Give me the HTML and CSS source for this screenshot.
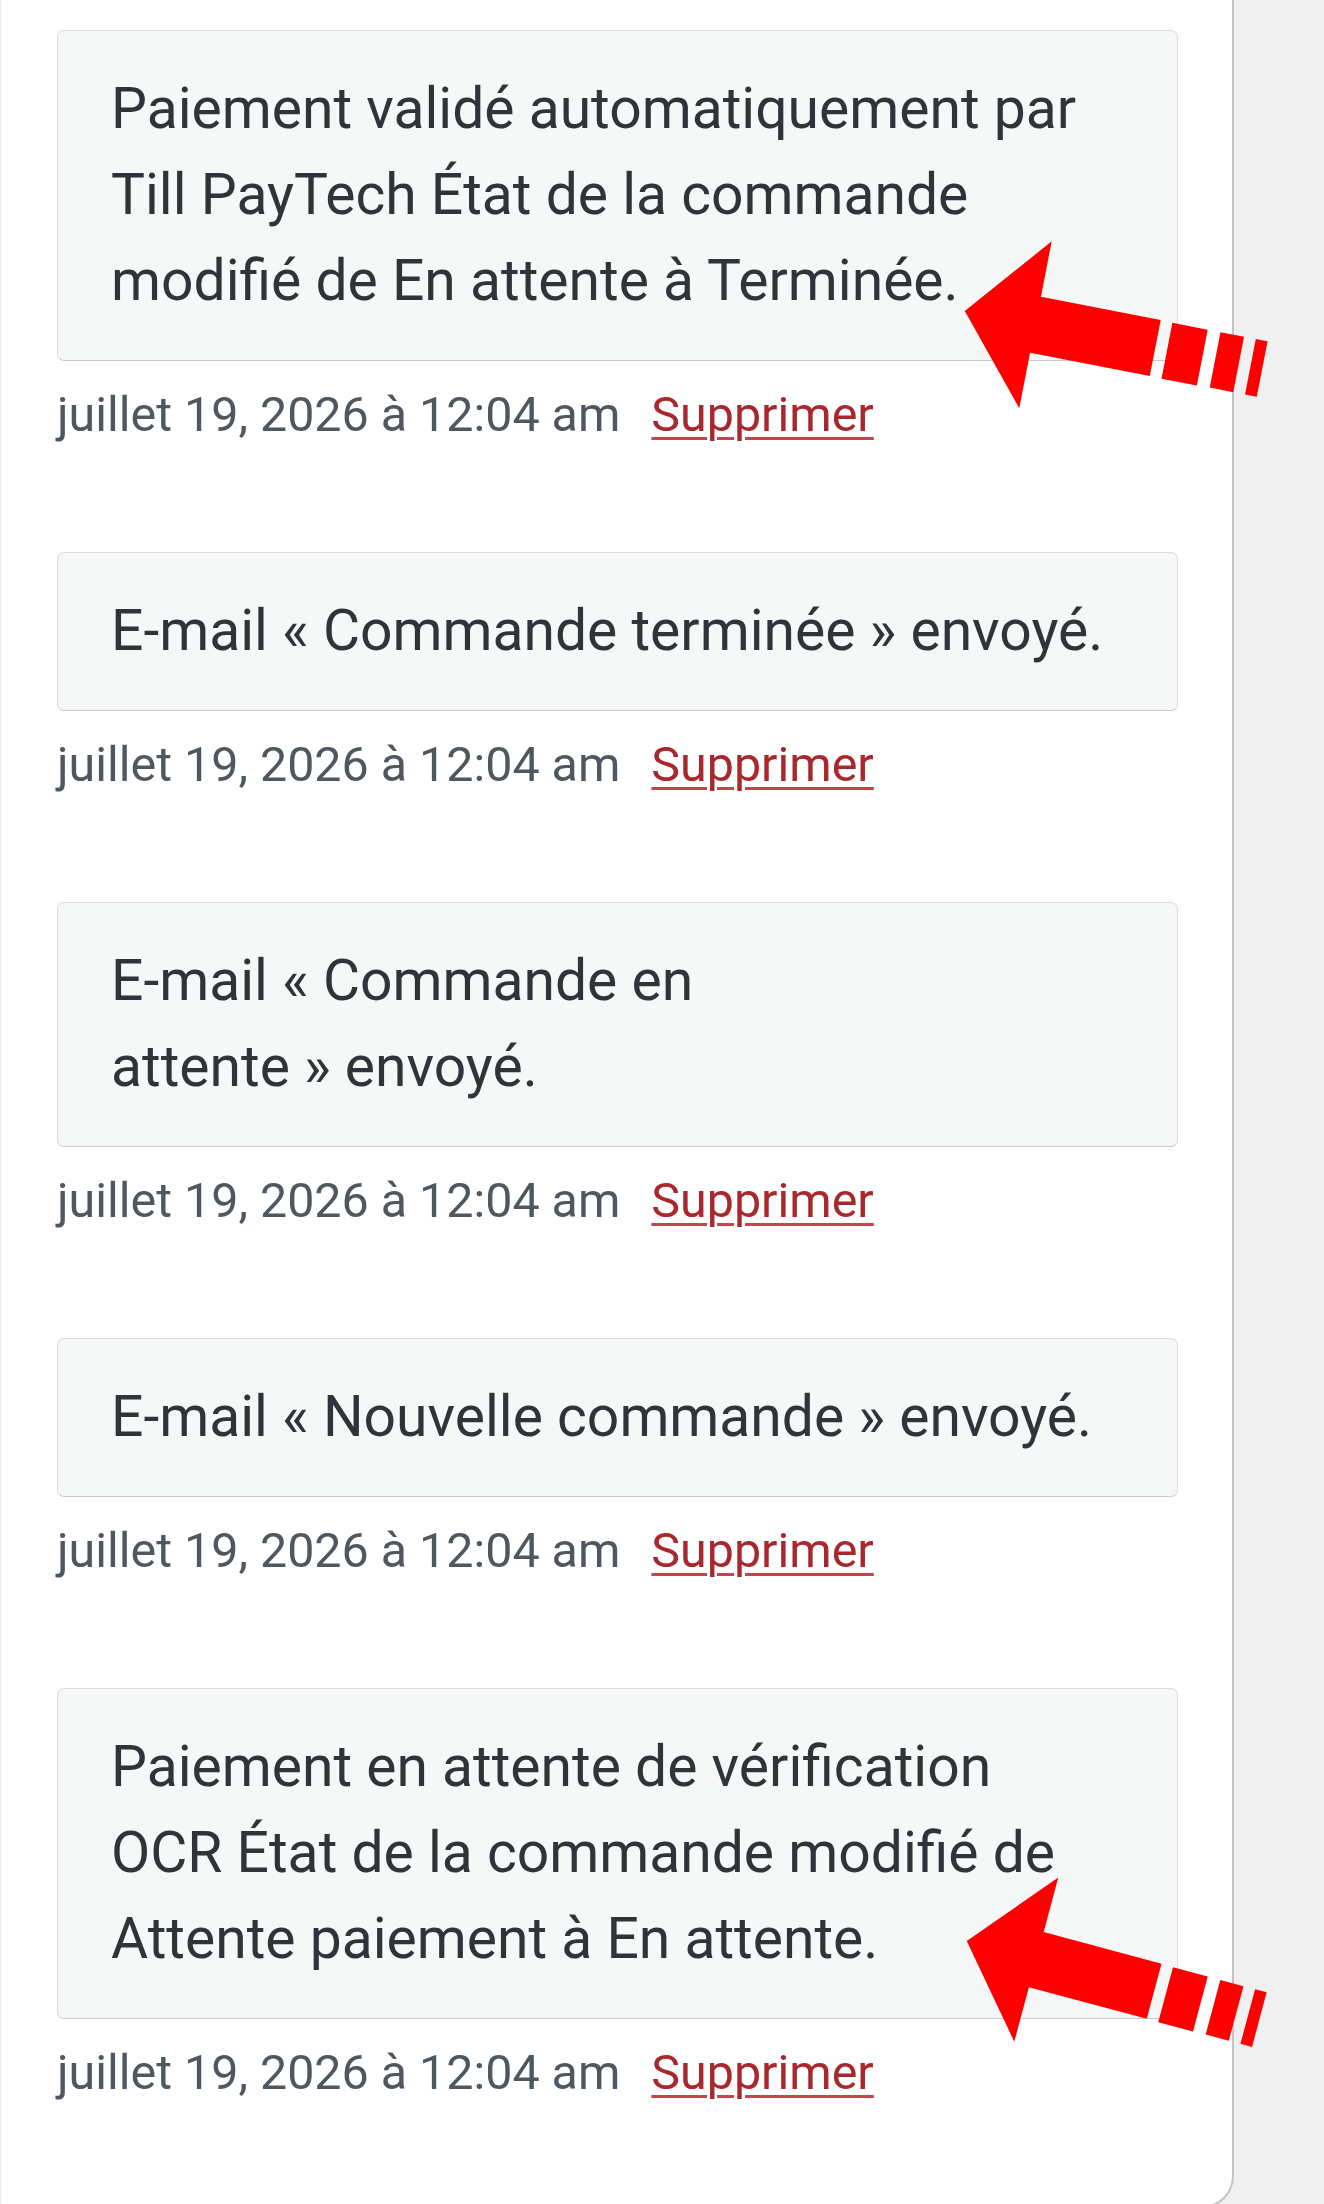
FILE: index.html
```html
<!DOCTYPE html>
<html lang="fr">
<head>
<meta charset="utf-8">
<title>Notes de commande</title>
<link rel="stylesheet" href="styles.css">
</head>
<body>
<div class="panel">
  <ul class="notes">
    <li class="note">
      <div class="note-content"><p>Paiement validé automatiquement par Till PayTech État de la commande modifié de En attente à Terminée.</p></div>
      <p class="meta">juillet 19, 2026 à 12:04 am<a class="delete" href="#">Supprimer</a></p>
    </li>
    <li class="note">
      <div class="note-content"><p>E-mail «&nbsp;Commande terminée&nbsp;» envoyé.</p></div>
      <p class="meta">juillet 19, 2026 à 12:04 am<a class="delete" href="#">Supprimer</a></p>
    </li>
    <li class="note">
      <div class="note-content"><p>E-mail «&nbsp;Commande en attente&nbsp;»&nbsp;envoyé.</p></div>
      <p class="meta">juillet 19, 2026 à 12:04 am<a class="delete" href="#">Supprimer</a></p>
    </li>
    <li class="note">
      <div class="note-content"><p>E-mail «&nbsp;Nouvelle commande&nbsp;» envoyé.</p></div>
      <p class="meta">juillet 19, 2026 à 12:04 am<a class="delete" href="#">Supprimer</a></p>
    </li>
    <li class="note">
      <div class="note-content"><p>Paiement en attente de vérification OCR État de la commande modifié de Attente paiement à En attente.</p></div>
      <p class="meta">juillet 19, 2026 à 12:04 am<a class="delete" href="#">Supprimer</a></p>
    </li>
  </ul>
</div>
<svg class="annotations" width="1324" height="2204" viewBox="0 0 1324 2204" aria-hidden="true">
  <defs>
    <g id="red-arrow">
      <polygon points="0,1 72,-84 72,-27.5 194,-27.5 194,29.5 72,29.5 72,86"/>
      <polygon points="206,-27 242,-27 242,30 206,30"/>
      <polygon points="255,-27 279,-27 279,29.5 255,29.5"/>
      <polygon points="291,-27 303,-27 303,29.5 291,29.5"/>
    </g>
  </defs>
  <use href="#red-arrow" class="arrow" transform="translate(965 310) rotate(11)"/>
  <use href="#red-arrow" class="arrow" transform="translate(967 1940) rotate(15)"/>
</svg>
</body>
</html>
```
FILE: styles.css
```css
html, body {
  margin: 0;
  padding: 0;
  overflow: hidden;
}

body {
  background: #f0f0f1;
  width: 1324px;
  height: 2204px;
  position: relative;
  font-family: Roboto, "Noto Sans", "Liberation Sans", sans-serif;
}

.panel {
  box-sizing: border-box;
  width: 1234px;
  height: 2208px;
  background: #ffffff;
  border-left: 1px solid #ececec;
  border-right: 2px solid #c3c4c7;
  border-bottom: 2px solid #c3c4c7;
  border-bottom-right-radius: 32px;
  padding: 30px 54px 0 56px;
}

.notes {
  list-style: none;
  margin: 0;
  padding: 0;
}

.note-content {
  background: #f6f7f7;
  border: 1px solid #dcdcde;
  border-bottom-color: #c9cbce;
  border-radius: 7px;
  padding: 35px 66px 36px 53px;
  color: #2f3439;
  font-size: 57px;
  line-height: 86px;
}

.note-content p {
  margin: 0;
}

.meta {
  margin: 18px 0 101px;
  color: #50575e;
  font-size: 48.4px;
  line-height: 72px;
}

.delete {
  margin-left: 31px;
  color: #a8282d;
  text-decoration: underline;
  text-decoration-color: #c4464a;
  text-decoration-thickness: 3px;
  text-underline-offset: 6px;
}

.annotations {
  position: absolute;
  top: 0;
  left: 0;
  pointer-events: none;
}

.arrow {
  fill: #ff0000;
}
```
